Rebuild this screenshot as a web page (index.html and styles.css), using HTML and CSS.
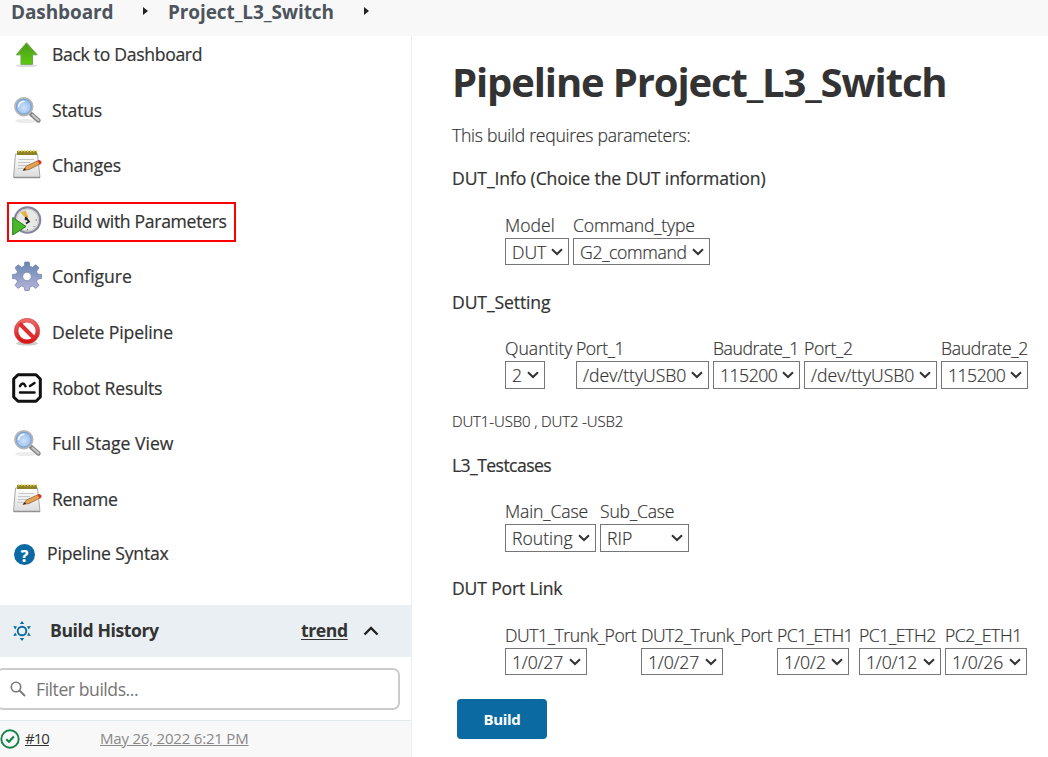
FILE: index.html
```html
<!DOCTYPE html>
<html lang="en">
<head>
<meta charset="utf-8">
<title>Project_L3_Switch</title>
<link rel="stylesheet" href="styles.css">
</head>
<body>
<svg width="0" height="0" class="defs" aria-hidden="true">
  <defs>
    <linearGradient id="green" x1="0" y1="0" x2="0" y2="1"><stop offset="0" stop-color="#4b9a1c"/><stop offset="1" stop-color="#5ccb0e"/></linearGradient>
    <linearGradient id="paper" x1="0" y1="0" x2="0" y2="1"><stop offset="0" stop-color="#fff"/><stop offset="1" stop-color="#dcdcdc"/></linearGradient>
    <linearGradient id="gear" x1="0" y1="0" x2="0" y2="1"><stop offset="0" stop-color="#6484b0"/><stop offset="1" stop-color="#b9b5dc"/></linearGradient>
    <linearGradient id="red" x1="0" y1="0" x2="0" y2="1"><stop offset="0" stop-color="#ea6a6a"/><stop offset="1" stop-color="#d81414"/></linearGradient>
    <radialGradient id="lens" cx=".5" cy=".55" r=".6"><stop offset="0" stop-color="#cfe2fa"/><stop offset="1" stop-color="#86b2ea"/></radialGradient>
    <symbol id="i-up" viewBox="0 0 30 30"><ellipse cx="14.500" cy="26.600" rx="11" ry="1.600" fill="#ddd"/><path d="M14.500 3.800 4.300 15.800H9V25.300H20.500V15.800H25.200Z" fill="url(#green)" stroke="#6aa548" stroke-width="1" stroke-linejoin="round"/></symbol>
    <symbol id="i-search" viewBox="0 0 30 30"><ellipse cx="14" cy="26" rx="11" ry="2" fill="#ececec"/><path d="M19 19 26.500 25.500" stroke="#858585" stroke-width="4.400" stroke-linecap="round"/><path d="M20.500 20 26.500 25.200" stroke="#c8c8c8" stroke-width="2" stroke-linecap="round"/><circle cx="11.800" cy="11.700" r="8.700" fill="url(#lens)" stroke="#b4b6b8" stroke-width="2"/><circle cx="11.800" cy="11.700" r="7.400" fill="none" stroke="#6d97d0" stroke-width=".9"/><path d="M6.500 12Q7 6.500 12.500 6.300" fill="none" stroke="#f2f8ff" stroke-width="1.600"/></symbol>
    <symbol id="i-note" viewBox="0 0 30 30"><path d="M3.500 4H25.500L28 27.500H1.500Z" fill="url(#paper)" stroke="#a9a9a9"/><path d="M2 27.500H28" stroke="#909090" stroke-width="1.500"/><path d="M5 1H25V5H5Z" fill="#8c8124"/><path d="M6 1.200H25" stroke="#d8c94c" stroke-width="2" stroke-dasharray="1.500 1.500"/><path d="M6.500 9.500H22M6 12.500H18M6 15.500H15M5.500 18.500H12" stroke="#c5c7cb" stroke-width="1"/><path d="M11 20.500 14.500 16 26.500 10.500 29 13.500 17 19.500Z" fill="#e5a453" stroke="#96602a" stroke-width=".8"/><path d="M25.500 11 27.500 10Q30 11 29.500 13L27.500 14.200Z" fill="#d93226"/><path d="M11 20.500 13 18 14 19.700Z" fill="#222"/></symbol>
    <symbol id="i-clock" viewBox="0 0 30 30"><circle cx="15.500" cy="14" r="12.700" fill="#e8e8e4" stroke="#8585a0" stroke-width="2.200"/><circle cx="15.500" cy="14" r="11" fill="none" stroke="#c0c0c8" stroke-width=".8"/><path d="M8.500 6.500 13.500 4.500 16.500 11.500 14 12.500Z" fill="#e1b342"/><path d="M13.500 11 17 15.500 14 17.500" fill="none" stroke="#26262c" stroke-width="1.700"/><circle cx="14" cy="13" r="1.400" fill="#26262c"/><path d="M23.500 14H25M15.500 23V24.500M21.500 20 22.500 21" stroke="#777" stroke-width="1"/><path d="M.7 11.500V29L14 20.500Z" fill="#4bb629" stroke="#267e18"/></symbol>
    <symbol id="i-gear" viewBox="0 0 30 30"><path d="M12.800 1h4.400l.7 4.200 2.600 1.100L24 3.800l3 3-2.500 3.600 1 2.500 4.200.7v3.800l-4.200.8-1 2.600 2.500 3.500-3 3.100-3.500-2.500-2.600 1-.8 3.600h-4.200l-.8-3.600-2.600-1L6 27.400l-3-3.100 2.500-3.500-1-2.600-4.200-.8v-3.800l4.200-.7 1-2.500L3 6.800l3-3 3.500 2.500 2.600-1.100ZM15 11.200a4.300 4.300 0 1 0 0 8.600 4.300 4.300 0 0 0 0-8.600Z" fill="url(#gear)" fill-rule="evenodd" stroke="#7687a9" stroke-width=".8"/></symbol>
    <symbol id="i-stop" viewBox="0 0 30 30"><ellipse cx="15" cy="26.500" rx="11" ry="2" fill="#ccc"/><circle cx="15" cy="14" r="10.700" fill="#fff" stroke="url(#red)" stroke-width="4.200"/><path d="M7.500 6.500 22.500 21.500" stroke="#dd2f2f" stroke-width="4"/><circle cx="15" cy="14" r="12.700" fill="none" stroke="#cc4a4a" stroke-width=".6"/></symbol>
    <symbol id="i-robot" viewBox="0 0 30 30"><path d="M6 1.700H24L28.300 6V24L24 28.300H6L1.700 24V6Z" fill="#fff" stroke="#111" stroke-width="3" stroke-linejoin="round"/><path d="M8 13.200Q10.900 7.800 13.500 13.200M18 13 22.500 10M8 19.500H22.500" fill="none" stroke="#111" stroke-width="2.500" stroke-linecap="round"/></symbol>
    <symbol id="i-chev" viewBox="0 0 12 8"><path d="M1 1.200 6 6 11 1.200" fill="none" stroke="#333" stroke-width="2"/></symbol>
  </defs>
</svg>

<header class="crumbs">
  <a class="crumb-home">Dashboard</a><i class="sep"></i><a class="crumb-job">Project_L3_Switch</a><i class="sep sep-end"></i>
</header>

<div class="page">
  <aside class="side">
    <nav class="tasks">
      <a class="task"><svg><use href="#i-up"/></svg><span class="t35">Back to Dashboard</span></a>
      <a class="task"><svg><use href="#i-search"/></svg><span class="t20">Status</span></a>
      <a class="task"><svg><use href="#i-note"/></svg><span class="t20">Changes</span></a>
      <a class="task task-marked"><svg><use href="#i-clock"/></svg><span class="t35">Build with Parameters</span></a>
      <a class="task"><svg><use href="#i-gear"/></svg><span class="t5">Configure</span></a>
      <a class="task"><svg><use href="#i-stop"/></svg><span class="t15">Delete Pipeline</span></a>
      <a class="task"><svg><use href="#i-robot"/></svg><span class="t20">Robot Results</span></a>
      <a class="task"><svg><use href="#i-search"/></svg><span>Full Stage View</span></a>
      <a class="task"><svg><use href="#i-note"/></svg><span class="t35">Rename</span></a>
      <a class="task task-help"><b class="help">?</b><span class="t20">Pipeline Syntax</span></a>
    </nav>

    <div class="history-head">
      <svg class="sun" viewBox="0 0 20 20"><circle cx="10" cy="10" r="4.300" fill="none" stroke="#0b6aa2" stroke-width="1.900"/><path d="M10 0 12.200 3H7.800ZM10 20 7.800 17H12.200ZM1.300 5 5 5.400 3.200 8.600ZM18.700 5 15 5.400 16.800 8.600ZM1.300 15 3.200 11.400 5 14.600ZM18.700 15 16.800 11.400 15 14.600Z" fill="#0b6aa2"/></svg>
      <span class="history-title">Build History</span>
      <a class="trend">trend</a>
      <svg class="fold" viewBox="0 0 16 10"><path d="M1.500 8.500 8 2 14.500 8.500" fill="none" stroke="#222" stroke-width="2.400"/></svg>
    </div>

    <div class="filter">
      <svg class="glass" viewBox="0 0 16 16"><circle cx="6" cy="6" r="4.700" fill="none" stroke="#777" stroke-width="1.600"/><path d="M9.500 9.500 15 15" stroke="#777" stroke-width="1.800"/></svg>
      <span class="filter-text">Filter builds...</span>
    </div>

    <div class="build-row">
      <svg class="ok" viewBox="0 0 20 20"><circle cx="10" cy="10" r="8.700" fill="none" stroke="#138347" stroke-width="1.900"/><path d="M6.200 10.200 9 12.800 13.800 7.600" fill="none" stroke="#138347" stroke-width="2.200"/></svg>
      <span class="build-no"><a>#10</a></span>
      <a class="build-date">May 26, 2022 6:21 PM</a>
    </div>
  </aside>

  <main class="main">
    <h1>Pipeline Project_L3_Switch</h1>
    <p class="intro">This build requires parameters:</p>

    <h2 class="group g-info t15">DUT_Info (Choice the DUT information)</h2>
    <div class="fields f-info">
      <div class="field"><span class="name">Model</span><span class="pick w64"><span>DUT</span><svg><use href="#i-chev"/></svg></span></div>
      <div class="field"><span class="name t20">Command_type</span><span class="pick w137"><span class="t35">G2_command</span><svg><use href="#i-chev"/></svg></span></div>
    </div>

    <h2 class="group g-setting t15">DUT_Setting</h2>
    <div class="fields tall f-setting">
      <div class="field"><span class="name">Quantity</span><span class="pick w40"><span>2</span><svg><use href="#i-chev"/></svg></span></div>
      <div class="field"><span class="name t45">Port_1</span><span class="pick w133"><span>/dev/ttyUSB0</span><svg><use href="#i-chev"/></svg></span></div>
      <div class="field"><span class="name t45">Baudrate_1</span><span class="pick w87"><span class="t50">115200</span><svg><use href="#i-chev"/></svg></span></div>
      <div class="field"><span class="name t35">Port_2</span><span class="pick w133"><span>/dev/ttyUSB0</span><svg><use href="#i-chev"/></svg></span></div>
      <div class="field"><span class="name t35">Baudrate_2</span><span class="pick w87"><span class="t50">115200</span><svg><use href="#i-chev"/></svg></span></div>
    </div>
    <p class="note t15">DUT1-USB0 , DUT2 -USB2</p>

    <h2 class="group g-cases t60">L3_Testcases</h2>
    <div class="fields tall f-cases">
      <div class="field"><span class="name t15">Main_Case</span><span class="pick w91"><span>Routing</span><svg><use href="#i-chev"/></svg></span></div>
      <div class="field"><span class="name t20">Sub_Case</span><span class="pick w89"><span>RIP</span><svg><use href="#i-chev"/></svg></span></div>
    </div>

    <h2 class="group g-link t20">DUT Port Link</h2>
    <div class="fields f-link">
      <div class="field"><span class="name t45">DUT1_Trunk_Port</span><span class="pick w82"><span class="t20">1/0/27</span><svg><use href="#i-chev"/></svg></span></div>
      <div class="field"><span class="name t45">DUT2_Trunk_Port</span><span class="pick w82"><span class="t20">1/0/27</span><svg><use href="#i-chev"/></svg></span></div>
      <div class="field"><span class="name t50">PC1_ETH1</span><span class="pick w72"><span>1/0/2</span><svg><use href="#i-chev"/></svg></span></div>
      <div class="field"><span class="name t45">PC1_ETH2</span><span class="pick w82"><span class="t20">1/0/12</span><svg><use href="#i-chev"/></svg></span></div>
      <div class="field"><span class="name t45">PC2_ETH1</span><span class="pick w82"><span class="t20">1/0/26</span><svg><use href="#i-chev"/></svg></span></div>
    </div>
    <button class="build" type="button">Build</button>
  </main>
</div>
</body>
</html>
```
FILE: styles.css
```css
* { box-sizing: border-box; }
body { margin: 0; height: 757px; overflow: hidden; background: #fff; color: #333; font: 17.6px/24px "Open Sans", "Noto Sans", sans-serif; }
h1, h2, p { margin: 0; }
svg { display: block; flex: none; }
.defs { position: absolute; }

/* Tracking steps, in hundredths of a pixel */
.t5 { letter-spacing: -.05px; } .t15 { letter-spacing: -.13px; } .t20 { letter-spacing: -.18px; }
.t35 { letter-spacing: -.32px; } .t45 { letter-spacing: -.42px; } .t50 { letter-spacing: -.5px; } .t60 { letter-spacing: -.58px; }

.crumbs { display: flex; align-items: flex-start; height: 36px; padding-left: 11px; background: #f8f8f8; color: #4d545d; font-size: 19px; font-weight: 700; line-height: 24px; letter-spacing: -.1px; white-space: nowrap; }
.crumb-home { width: 132px; }
.crumb-job { width: 196px; margin-left: 20px; }
.sep { width: 0; height: 0; margin-top: 7px; border: 4.500px solid transparent; border-left: 5px solid #222; border-right: 0; }

.page { display: flex; height: 721px; }
.side { width: 412px; border-right: 1px solid #e9eff2; }
.tasks { display: flex; flex-direction: column; align-items: flex-start; gap: 19.600px; height: 569px; padding-left: 9px; font-weight: 500; -webkit-text-stroke: .2px; }
.task { display: flex; flex: none; align-items: center; height: 36px; padding-left: 3px; white-space: nowrap; }
.task svg { width: 30px; height: 30px; margin-right: 10px; }
.task-marked { width: 225px; margin: 1px 0 -1px; padding-bottom: 1px; outline: 2px solid #f00; }
.task-help { padding-bottom: 2px; }
.help { display: grid; place-items: center; width: 21px; height: 21px; margin: 2px 12px 0 2px; border-radius: 50%; background: #0b6aa2; color: #fff; font-size: 16px; }

.history-head { display: flex; align-items: center; height: 52px; padding-left: 12px; background: #e9eff2; font-weight: 700; letter-spacing: -.4px; }
.sun { width: 20px; height: 20px; margin-right: 18px; }
.history-title { width: 251px; padding-bottom: 2px; }
.trend { width: 46px; padding-bottom: 2px; text-decoration: underline; text-underline-offset: 2px; }
.fold { width: 16px; height: 10px; margin-left: 16px; }
.filter { display: flex; align-items: center; width: 404px; height: 42px; margin: 11px 0 10px -4px; padding-left: 12px; border: 2px solid #ccc; border-radius: 7px; color: #757575; }
.filter-text { letter-spacing: -.45px; }
.glass { width: 16px; height: 16px; margin-right: 10px; }
.build-row { display: flex; align-items: center; height: 37px; border-top: 1px solid #e3eaed; background: #f8f8f8; font-size: 15px; letter-spacing: -.2px; }
.ok { width: 20px; height: 20px; margin-right: 5px; }
.build-no { width: 75px; padding-bottom: 3px; letter-spacing: -1px; text-decoration: underline; }
.build-date { padding-bottom: 3px; color: #888; text-decoration: underline; }

.main { flex: 1; padding: 22px 0 0 40px; white-space: nowrap; }
h1 { font-size: 40px; line-height: 48px; font-weight: 700; letter-spacing: -1.130px; }
.intro { margin-top: 17px; font-weight: 300; letter-spacing: -.27px; -webkit-text-stroke: .2px; }
.group { font-size: 17.600px; line-height: 24px; font-weight: 500; -webkit-text-stroke: .2px; }
.g-info { margin-top: 19px; }
.g-setting { margin-top: 25px; }
.g-cases { margin-top: 20px; }
.g-link { margin-top: 24px; }
.fields { display: grid; margin: 22px 0 0 53px; font-weight: 300; -webkit-text-stroke: .2px; }
.f-info { grid-template-columns: 68px 137px; margin-top: 23px; }
.f-setting { grid-template-columns: 71px 137px 91px 137px 87px; }
.f-cases { grid-template-columns: 95px 89px; }
.f-link { grid-template-columns: 136px 136px 82px 86px 82px; margin-top: 23px; }
.field { display: flex; flex-direction: column; align-items: flex-start; min-width: 0; }
.name { margin-bottom: 1px; }
.pick { display: flex; align-items: center; justify-content: space-between; height: 27px; padding: 0 5px 0 6px; border: 1px solid #767676; }
.tall .pick { height: 28px; }
.pick svg { width: 12px; height: 8px; }
.w40 { width: 40px; } .w64 { width: 64px; } .w72 { width: 72px; } .w82 { width: 82px; } .w87 { width: 87px; }
.w89 { width: 89px; } .w91 { width: 91px; } .w133 { width: 133px; } .w137 { width: 137px; }
.note { margin-top: 20px; font-size: 15px; font-weight: 300; -webkit-text-stroke: .2px; }
.build { display: block; width: 90px; height: 40px; margin: 24px 0 0 5px; padding: 0; border: 0; border-radius: 4px; background: #0b6aa2; color: #fff; font: 700 15px "Open Sans", sans-serif; letter-spacing: -.3px; }
```
